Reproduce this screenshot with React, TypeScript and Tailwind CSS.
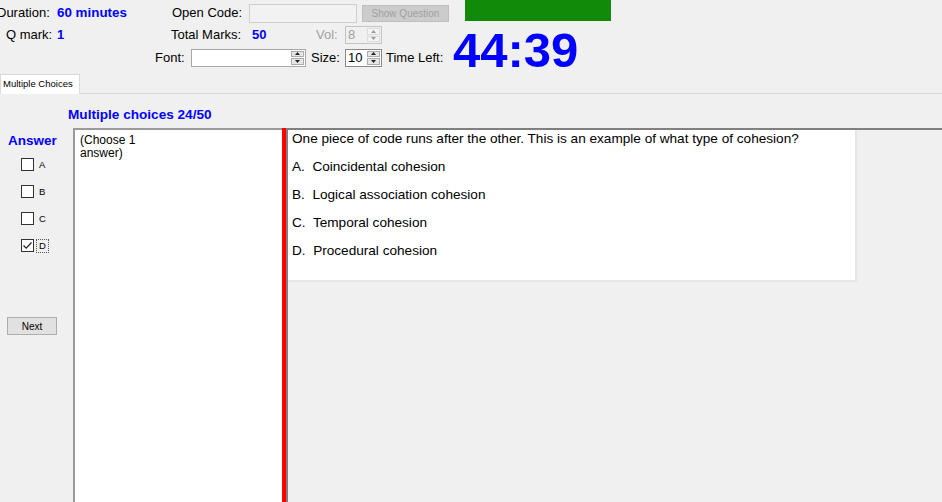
import React from "react";

function Spin({ value, disabled, w }: { value: string; disabled?: boolean; w: string }) {
  const border = disabled ? "border-[#c4c4c4]" : "border-[#8a8a8a]";
  const arrow = disabled ? "#9a9a9a" : "#222";
  return (
    <div className={`flex h-[18px] ${w} border ${border} ${disabled ? "bg-[#f0f0f0]" : "bg-white"}`}>
      <div className={`flex-1 pl-[2px] text-[13px] leading-[16px] ${disabled ? "text-[#a0a0a0]" : "text-black"}`}>{value}</div>
      <div className="my-[1px] mr-[1px] flex w-[13px] flex-col gap-[1px]">
        <div className={`flex flex-1 items-center justify-center border ${disabled ? "border-[#dcdcdc] bg-[#f4f4f4]" : "border-[#acacac] bg-[#e6e6e6]"}`}>
          <svg width="5" height="3" viewBox="0 0 5 3"><path d="M0 3 L2.5 0 L5 3 Z" fill={arrow} /></svg>
        </div>
        <div className={`flex flex-1 items-center justify-center border ${disabled ? "border-[#dcdcdc] bg-[#f4f4f4]" : "border-[#acacac] bg-[#e6e6e6]"}`}>
          <svg width="5" height="3" viewBox="0 0 5 3"><path d="M0 0 L2.5 3 L5 0 Z" fill={arrow} /></svg>
        </div>
      </div>
    </div>
  );
}

function Check({ label, checked }: { label: string; checked?: boolean }) {
  return (
    <div className="flex h-[13px] items-center">
      <div className="flex h-[13px] w-[13px] items-center justify-center border border-[#333] bg-white">
        {checked && (
          <svg width="11" height="11" viewBox="0 0 11 11">
            <path d="M1.5 5.5 L4.2 8.2 L9.5 2.5" stroke="#222" strokeWidth="1.2" fill="none" />
          </svg>
        )}
      </div>
      <div
        className={`ml-[2px] flex h-[14px] items-center border px-[2px] text-[9.5px] leading-[11px] ${
          checked ? "border-dotted border-[#555]" : "border-transparent"
        }`}
      >
        {label}
      </div>
    </div>
  );
}

export default function App() {
  return (
    <div className="flex h-[502px] w-[942px] flex-col overflow-hidden bg-[#f0f0f0] font-['Liberation_Sans',Arial,sans-serif] text-black">
      {/* header */}
      <div className="flex h-[74px]">
        <div className="flex w-[453px] flex-col">
          {/* row 1 */}
          <div className="flex h-[23px] items-center pt-[3px] text-[13px]">
            <div className="w-[57px] whitespace-nowrap">
              <span className="ml-[-3px]">Duration:</span>
            </div>
            <div className="w-[115px] text-[13.4px] font-bold text-[#0000ff]">60 minutes</div>
            <div className="w-[77px]">Open Code:</div>
            <div className="mt-[1px] h-[19px] w-[108px] self-start border border-[#cfcfcf] bg-[#f2f2f2]" />
            <div className="ml-[5px] mt-[2px] flex h-[17px] w-[87px] items-center justify-center self-start border border-[#bfbfbf] bg-[#cccccc] text-[10px] text-[#a0a0a0]">
              Show Question
            </div>
          </div>
          {/* row 2 */}
          <div className="flex h-[22px] items-center pt-[2px] text-[13px]">
            <div className="w-[6px]" />
            <div className="w-[51px]">Q mark:</div>
            <div className="w-[114px] font-bold text-[#0000ff]">1</div>
            <div className="w-[81px]">Total Marks:</div>
            <div className="w-[64px] font-bold text-[#0000ff]">50</div>
            <div className="w-[29px] text-[#a0a0a0]">Vol:</div>
            <Spin value="8" disabled w="w-[37px]" />
          </div>
          {/* row 3 */}
          <div className="flex h-[24px] items-center pt-[1px] text-[13px]">
            <div className="w-[155px]" />
            <div className="w-[36px]">Font:</div>
            <div className="flex h-[18px] w-[115px] border border-[#a8a8a8] bg-white">
              <div className="flex-1" />
              <div className="my-[1px] mr-[1px] flex w-[13px] flex-col gap-[1px]">
                <div className="flex flex-1 items-center justify-center border border-[#acacac] bg-[#e6e6e6]">
                  <svg width="5" height="3" viewBox="0 0 5 3"><path d="M0 3 L2.5 0 L5 3 Z" fill="#222" /></svg>
                </div>
                <div className="flex flex-1 items-center justify-center border border-[#acacac] bg-[#e6e6e6]">
                  <svg width="5" height="3" viewBox="0 0 5 3"><path d="M0 0 L2.5 3 L5 0 Z" fill="#222" /></svg>
                </div>
              </div>
            </div>
            <div className="ml-[5px] w-[34px]">Size:</div>
            <Spin value="10" w="w-[37px]" />
            <div className="ml-[4px]">Time Left:</div>
          </div>
        </div>
        <div className="flex flex-col">
          <div className="ml-[12px] h-[23px] w-[146px] bg-[#118a0a]" />
          <div className="mt-[5px] text-[49px] font-bold leading-[48px] text-[#0000ff]">44:39</div>
        </div>
      </div>

      {/* tab strip */}
      <div className="flex h-[20px]">
        <div className="flex w-[80px] items-center border-l border-r border-t border-[#d9d9d9] bg-white pl-[2px] text-[9.5px]">
          Multiple Choices
        </div>
        <div className="flex-1 border-b border-[#d9d9d9]" />
      </div>

      {/* tab page */}
      <div className="flex flex-1 flex-col">
        <div className="ml-[68px] mt-[13px] h-[16px] text-[13.6px] font-bold leading-[16px] text-[#0000ff]">
          Multiple choices 24/50
        </div>
        <div className="mt-[5px] flex flex-1">
          {/* answer column */}
          <div className="flex w-[73px] flex-col">
            <div className="mt-[5px] pl-[8px] text-[13.5px] font-bold leading-[16px] text-[#0000ff]">Answer</div>
            <div className="ml-[21px] mt-[9px] flex flex-col gap-[14px]">
              <Check label="A" />
              <Check label="B" />
              <Check label="C" />
              <Check label="D" checked />
            </div>
            <div className="ml-[7px] mt-[65px] flex h-[18px] w-[50px] items-center justify-center border border-[#adadad] bg-[#e1e1e1] text-[10px]">
              Next
            </div>
          </div>
          {/* choose text box */}
          <div className="w-[209px] border-l-2 border-t-2 border-[#9a9a9a] bg-white pl-[5px] pt-[4px] text-[12px] leading-[13px]">
            (Choose 1
            <br />
            answer)
          </div>
          {/* red bar */}
          <div className="w-[4px] bg-[#ff0000]" />
          {/* question panel */}
          <div className="flex flex-1 flex-col border-l-2 border-t-2 border-[#808080]">
            <div className="flex h-[152px] w-[569px] flex-col gap-[12px] border-b-2 border-r-2 border-[#e6e6e6] bg-white pl-[4px] pt-[1px] text-[13.6px] leading-[16px]">
              <div>One piece of code runs after the other. This is an example of what type of cohesion?</div>
              <div className="whitespace-pre">A.  Coincidental cohesion</div>
              <div className="whitespace-pre">B.  Logical association cohesion</div>
              <div className="whitespace-pre">C.  Temporal cohesion</div>
              <div className="whitespace-pre">D.  Procedural cohesion</div>
            </div>
          </div>
        </div>
      </div>
    </div>
  );
}
